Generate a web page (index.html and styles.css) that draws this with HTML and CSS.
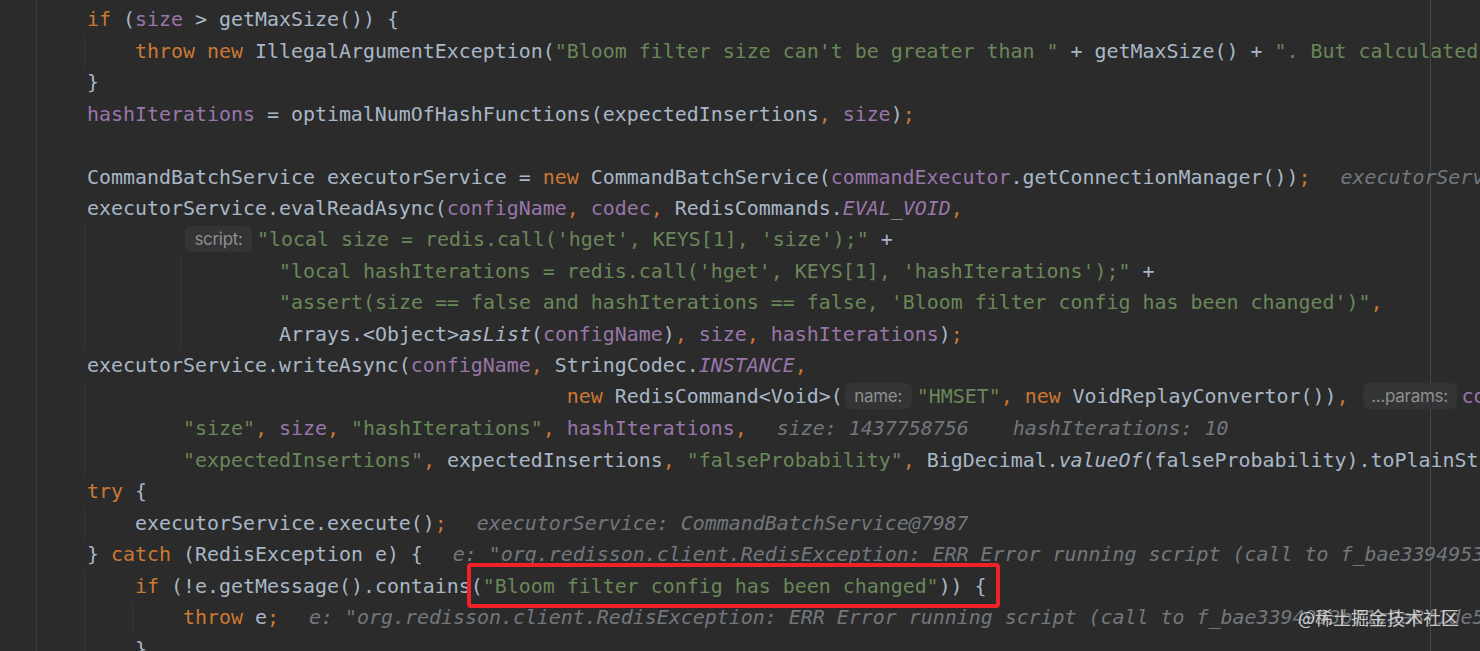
FILE: index.html
```html
<!DOCTYPE html>
<html lang="en">
<head>
<meta charset="utf-8">
<title>Editor</title>
<link rel="stylesheet" href="styles.css">
</head>
<body>
<div class="editor">
  <div class="line"><span class="c"><span class="k">if</span> (<span class="v">size</span> &gt; getMaxSize()) {</span></div>
  <div class="line"><span class="u g"></span><span class="c"><span class="k">throw new</span> IllegalArgumentException(<span class="s">"Bloom filter size can't be greater than "</span> + getMaxSize() + <span class="s">". But calculated size is "</span> + size)<span class="p">;</span></span></div>
  <div class="line"><span class="c">}</span></div>
  <div class="line"><span class="c"><span class="v">hashIterations</span> = optimalNumOfHashFunctions(expectedInsertions<span class="p">,</span> <span class="v">size</span>)<span class="p">;</span></span></div>
  <div class="line"><span class="c"></span></div>
  <div class="line"><span class="c">CommandBatchService executorService = <span class="k">new</span> CommandBatchService(<span class="v">commandExecutor</span>.getConnectionManager())<span class="p">;</span><span class="h">executorService: CommandBatchService@7987</span></span></div>
  <div class="line"><span class="c">executorService.evalReadAsync(<span class="v">configName</span><span class="p">,</span> <span class="v">codec</span><span class="p">,</span> RedisCommands.<span class="v it">EVAL_VOID</span><span class="p">,</span></span></div>
  <div class="line"><span class="u g"></span><span class="u"></span><span class="c"><span class="ph">script:</span><span class="s">"local size = redis.call('hget', KEYS[1], 'size');"</span> +</span></div>
  <div class="line"><span class="u g"></span><span class="u"></span><span class="u g"></span><span class="u"></span><span class="c"><span class="s">"local hashIterations = redis.call('hget', KEYS[1], 'hashIterations');"</span> +</span></div>
  <div class="line"><span class="u g"></span><span class="u"></span><span class="u g"></span><span class="u"></span><span class="c"><span class="s">"assert(size == false and hashIterations == false, 'Bloom filter config has been changed')"</span><span class="p">,</span></span></div>
  <div class="line"><span class="u g"></span><span class="u"></span><span class="u g"></span><span class="u"></span><span class="c">Arrays.&lt;Object&gt;<span class="it">asList</span>(<span class="v">configName</span>)<span class="p">,</span> <span class="v">size</span><span class="p">,</span> <span class="v">hashIterations</span>)<span class="p">;</span></span></div>
  <div class="line"><span class="c">executorService.writeAsync(<span class="v">configName</span><span class="p">,</span> StringCodec.<span class="v it">INSTANCE</span><span class="p">,</span></span></div>
  <div class="line"><span class="u g"></span><span class="c">                                    <span class="k">new</span> RedisCommand&lt;Void&gt;(<span class="ph">name:</span><span class="s">"HMSET"</span><span class="p">,</span> <span class="k">new</span> VoidReplayConvertor())<span class="p">,</span> <span class="ph ph-wide">...params:</span><span class="v">configName</span><span class="p">,</span></span></div>
  <div class="line"><span class="u g"></span><span class="u"></span><span class="c"><span class="s">"size"</span><span class="p">,</span> <span class="v">size</span><span class="p">,</span> <span class="s">"hashIterations"</span><span class="p">,</span> <span class="v">hashIterations</span><span class="p">,</span><span class="h">size: 1437758756</span><span class="h h2">hashIterations: 10</span></span></div>
  <div class="line"><span class="u g"></span><span class="u"></span><span class="c"><span class="s">"expectedInsertions"</span><span class="p">,</span> expectedInsertions<span class="p">,</span> <span class="s">"falseProbability"</span><span class="p">,</span> BigDecimal.<span class="it">valueOf</span>(falseProbability).toPlainString())<span class="p">;</span></span></div>
  <div class="line"><span class="c"><span class="k">try</span> {</span></div>
  <div class="line"><span class="u g"></span><span class="c">executorService.execute()<span class="p">;</span><span class="h">executorService: CommandBatchService@7987</span></span></div>
  <div class="line"><span class="c">} <span class="k">catch</span> (RedisException e) {<span class="h">e: "org.redisson.client.RedisException: ERR Error running script (call to f_bae3394953b71c9a8f1de5e0a)"</span></span></div>
  <div class="line"><span class="u g"></span><span class="c"><span class="k">if</span> (!e.getMessage().contains(<span class="s">"Bloom filter config has been changed"</span>)) {</span></div>
  <div class="line"><span class="u g"></span><span class="u g"></span><span class="c"><span class="k">throw</span> e<span class="p">;</span><span class="h">e: "org.redisson.client.RedisException: ERR Error running script (call to f_bae3394953b71c9a8f1de5e0a)"</span></span></div>
  <div class="line"><span class="u g"></span><span class="c">}</span></div>

  <div class="mark"></div>
  <div class="wm">@稀土掘金技术社区</div>
</div>
</body>
</html>
```

FILE: styles.css
```css
* { box-sizing: border-box; }

html, body {
  margin: 0;
  padding: 0;
  background: #2b2b2b;
  overflow: hidden;
}

.editor {
  position: relative;
  width: 1480px;
  height: 651px;
  overflow: hidden;
  padding-top: 4px;
  font-family: "DejaVu Sans Mono", "Liberation Mono", monospace;
  font-size: 19.93px;
  color: #a9b7c6;
  background:
    linear-gradient(90deg, transparent 36px, #393939 36px, #393939 37px, transparent 37px),
    linear-gradient(90deg, transparent 1430px, #464646 1430px, #464646 1431px, transparent 1431px),
    #2b2b2b;
}

.line {
  display: flex;
  align-items: center;
  height: 31.47px;
  padding-left: 84px;
  white-space: pre;
}

.u {
  flex: none;
  width: 48px;
  align-self: stretch;
}

.u.g {
  box-shadow: inset 1px 0 0 #373737;
}

.c {
  flex: none;
  padding-left: 3px;
}

.k { color: #cc7832; }
.s { color: #6a8759; }
.v { color: #9876aa; }
.p { color: #cc7832; }
.it { font-style: italic; }

.h {
  font-style: italic;
  color: #72777d;
  margin-left: 30px;
}

.h2 { margin-left: 44px; }

.ph {
  display: inline-block;
  vertical-align: middle;
  height: 26px;
  line-height: 26px;
  width: 67px;
  margin: -3px 5px 0 2px;
  border-radius: 6px;
  background: #333435;
  color: #8f8f8f;
  font-family: "Inter", "Noto Sans", sans-serif;
  font-size: 17px;
  text-align: center;
  letter-spacing: -0.3px;
}

.ph-wide { width: 94px; }

.mark {
  position: absolute;
  left: 467px;
  top: 563px;
  width: 533px;
  height: 45px;
  border: 4px solid #f02226;
  border-radius: 4px;
}

.wm {
  position: absolute;
  left: 1298px;
  top: 605px;
  font-family: "Noto Sans CJK SC", sans-serif;
  font-size: 18px;
  line-height: 24px;
  color: rgba(236, 236, 236, 0.82);
  white-space: nowrap;
}
```
